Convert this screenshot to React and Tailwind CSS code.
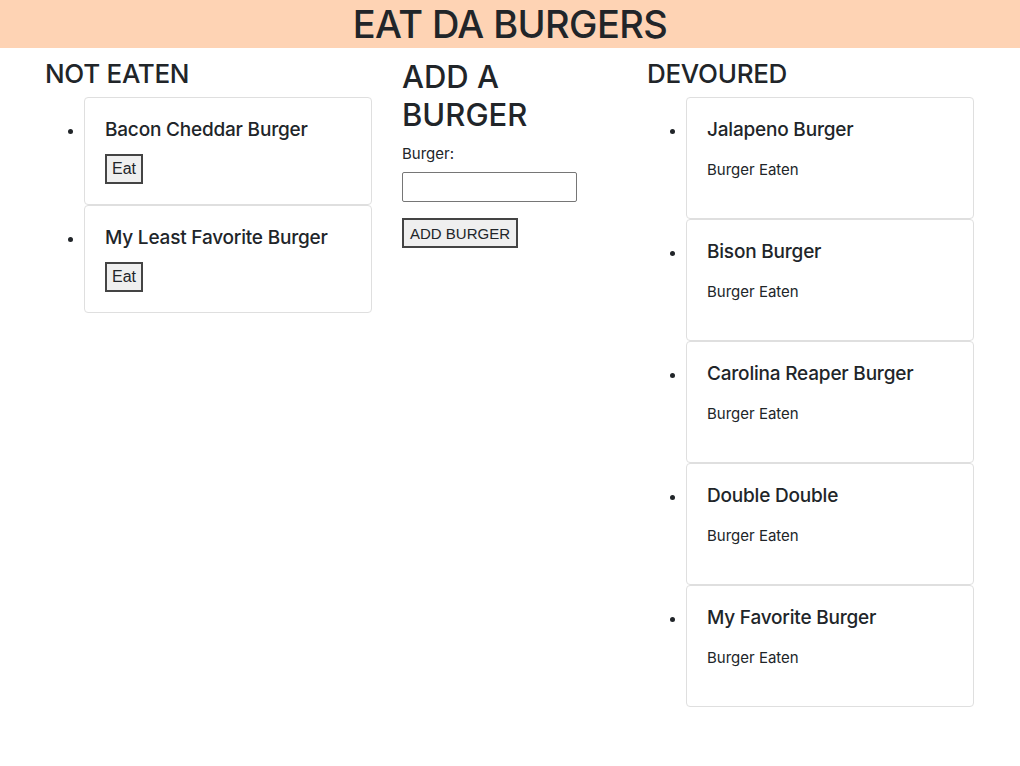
import React from 'react';

const notEaten = ['Bacon Cheddar Burger', 'My Least Favorite Burger'];
const devoured = ['Jalapeno Burger', 'Bison Burger', 'Carolina Reaper Burger', 'Double Double', 'My Favorite Burger'];

const App = () => {
  return (
    <div className="min-h-screen bg-white text-[#212529] font-['Inter',sans-serif] text-base">
      {/* Header */}
      <header className="bg-[#fed3b4] h-12 flex items-center justify-center">
        <h1 className="text-[38px] leading-[48px] font-medium tracking-[-0.6px]">EAT DA BURGERS</h1>
      </header>

      <div className="mx-auto w-[930px] grid grid-cols-[327px_215px_327px] gap-x-[30px] pt-[11px]">
        {/* Not eaten */}
        <div>
          <h4 className="text-[26px] leading-[30px] font-medium mb-2 tracking-[-0.3px]">NOT EATEN</h4>
          <ul className="list-disc pl-10">
            {notEaten.map((name) => (
              <li key={name}>
                <div className="-ml-px border border-[#dfdfdf] rounded p-5 h-[108px]">
                  <h5 className="text-[19px] leading-6 font-medium mb-3 tracking-[-0.2px]">{name}</h5>
                  <button className="h-[30px] px-[5px] border-2 border-[#444] bg-[#efefef] font-['Liberation_Sans',sans-serif] text-base leading-none">
                    Eat
                  </button>
                </div>
              </li>
            ))}
          </ul>
        </div>

        {/* Add a burger */}
        <div className="-mt-[1px]">
          <h2 className="text-[31px] leading-[38px] font-medium mb-2">ADD A BURGER</h2>
          <form onSubmit={(e) => e.preventDefault()}>
            <label className="block text-[15px] leading-6 mb-[6px]">Burger:</label>
            <input type="text" className="block w-[175px] h-[30px] border border-[#767676] rounded-[2px] px-1" />
            <button className="mt-4 h-[30px] px-[6px] border-2 border-[#444] bg-[#efefef] font-['Liberation_Sans',sans-serif] text-[15px] leading-none">
              ADD BURGER
            </button>
          </form>
        </div>

        {/* Devoured */}
        <div>
          <h4 className="text-[26px] leading-[30px] font-medium mb-2 tracking-[-0.3px]">DEVOURED</h4>
          <ul className="list-disc pl-10">
            {devoured.map((name) => (
              <li key={name}>
                <div className="-ml-px border border-[#dfdfdf] rounded p-5 h-[122px]">
                  <h5 className="text-[19px] leading-6 font-medium mb-4 tracking-[-0.2px]">{name}</h5>
                  <p className="text-[15px] leading-6">Burger Eaten</p>
                </div>
              </li>
            ))}
          </ul>
        </div>
      </div>
    </div>
  );
};

export default App;
